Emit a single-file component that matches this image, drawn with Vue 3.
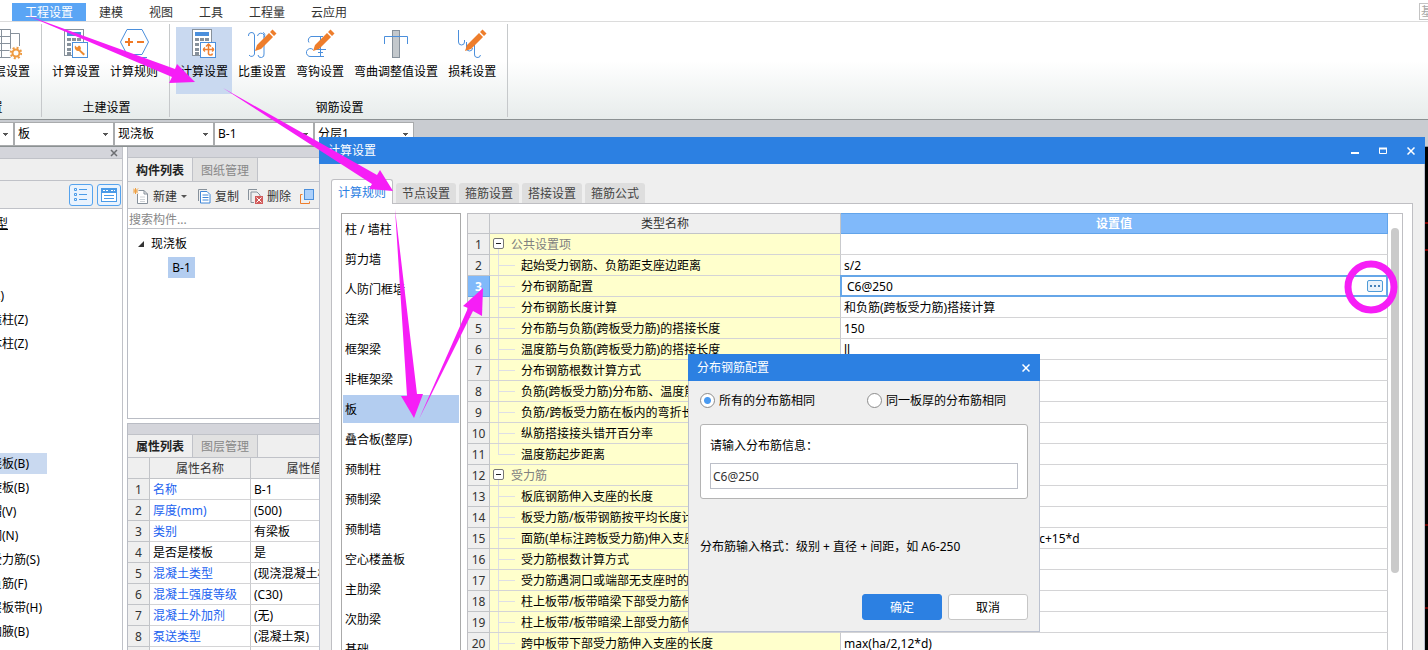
<script setup>
import { ref } from 'vue'

const menus = ['工程设置', '建模', '视图', '工具', '工程量', '云应用']
const ribbon = [
  { title: '基本设置', items: [{ text: '工程信息', icon: '' }, { text: '楼层设置', icon: 'floor' }] },
  { title: '土建设置', items: [{ text: '计算设置', icon: 'wrench' }, { text: '计算规则', icon: 'hexagon' }] },
  {
    title: '钢筋设置',
    items: [
      { text: '计算设置', icon: 'rebar', active: true },
      { text: '比重设置', icon: 'weight' },
      { text: '弯钩设置', icon: 'hook' },
      { text: '弯曲调整值设置', icon: 'bend' },
      { text: '损耗设置', icon: 'loss' },
    ],
  },
]
const combos = [
  { label: '楼层', value: '首层' },
  { label: '构件类别', value: '板' },
  { label: '构件类型', value: '现浇板' },
  { label: '构件', value: 'B-1' },
  { label: '分层', value: '分层1' },
]
const navTree = [
  '', '', '柱(Z)', '构造柱(Z)', '砌体柱(Z)', '', '', '', '',
  '现浇板(B)', '螺旋板(B)', '柱帽(V)', '板洞(N)', '板受力筋(S)', '板负筋(F)', '楼层板带(H)', '板加腋(B)',
]
const props = [
  { name: '名称', value: 'B-1', link: true },
  { name: '厚度(mm)', value: '(500)', link: true },
  { name: '类别', value: '有梁板', link: true },
  { name: '是否是楼板', value: '是', link: false },
  { name: '混凝土类型', value: '(现浇混凝土板)', link: true },
  { name: '混凝土强度等级', value: '(C30)', link: true },
  { name: '混凝土外加剂', value: '(无)', link: true },
  { name: '泵送类型', value: '(混凝土泵)', link: true },
  { name: '', value: '', link: true },
]
const ruleTabs = ['计算规则', '节点设置', '箍筋设置', '搭接设置', '箍筋公式']
const kinds = [
  '柱 / 墙柱', '剪力墙', '人防门框墙', '连梁', '框架梁', '非框架梁', '板', '叠合板(整厚)',
  '预制柱', '预制梁', '预制墙', '空心楼盖板', '主肋梁', '次肋梁', '基础',
]
const currentKind = ref('板')
const rules = [
  { name: '公共设置项', group: true, value: '' },
  { name: '起始受力钢筋、负筋距支座边距离', value: 's/2' },
  { name: '分布钢筋配置', value: 'C6@250', editing: true },
  { name: '分布钢筋长度计算', value: '和负筋(跨板受力筋)搭接计算' },
  { name: '分布筋与负筋(跨板受力筋)的搭接长度', value: '150' },
  { name: '温度筋与负筋(跨板受力筋)的搭接长度', value: 'll' },
  { name: '分布钢筋根数计算方式', value: '' },
  { name: '负筋(跨板受力筋)分布筋、温度筋是否带弯勾', value: '' },
  { name: '负筋/跨板受力筋在板内的弯折长度', value: '' },
  { name: '纵筋搭接接头错开百分率', value: '' },
  { name: '温度筋起步距离', value: '', last: true },
  { name: '受力筋', group: true, value: '' },
  { name: '板底钢筋伸入支座的长度', value: '' },
  { name: '板受力筋/板带钢筋按平均长度计算', value: '' },
  { name: '面筋(单标注跨板受力筋)伸入支座的锚固长度', value: '能直锚就直锚,否则按公式计算:ha-bhc+15*d' },
  { name: '受力筋根数计算方式', value: '' },
  { name: '受力筋遇洞口或端部无支座时的弯折长度', value: '' },
  { name: '柱上板带/板带暗梁下部受力筋伸入支座的长度', value: '' },
  { name: '柱上板带/板带暗梁上部受力筋伸入支座的长度', value: '' },
  { name: '跨中板带下部受力筋伸入支座的长度', value: 'max(ha/2,12*d)' },
  { name: '', value: '' },
]
const mode = ref('same')
const rebar = ref('C6@250')
</script>

<template>
  <div class="app">
    <nav class="menubar">
      <button v-for="(m, i) in menus" :key="m" class="menu" :class="{ on: i === 0 }">{{ m }}</button>
      <span class="menu-search">基</span>
    </nav>

    <header class="ribbon">
      <section v-for="g in ribbon" :key="g.title" class="section">
        <div class="tools">
          <button v-for="t in g.items" :key="t.text" class="tool" :class="{ on: t.active }">
            <svg width="32" height="32" viewBox="0 0 32 32" fill="none" aria-hidden="true">
              <g v-if="t.icon === 'floor'" stroke="#87919b">
                <path d="M1 1.500H20.500V29.500H1M1 8.500H20.500M1 15.500H20.500M1 22.500H20.500M11.500 1.500V29.500M20.500 5.500H29.500V18" />
                <circle cx="26" cy="25" r="7" fill="#fcfcfc" stroke="none" />
                <circle cx="26" cy="25" r="3.500" stroke="#ee9a40" stroke-width="2" />
                <circle cx="26" cy="25" r="5.200" stroke="#ee9a40" stroke-width="2" stroke-dasharray="2 2.080" />
              </g>
              <g v-else-if="t.icon === 'wrench' || t.icon === 'rebar'">
                <rect x="4.500" y="1.500" width="19" height="26" fill="#fff" stroke="#87919b" />
                <rect x="7" y="4" width="14" height="4" fill="#4b8fdc" />
                <path d="M7 11.500h14M7 16.500h14M7 21.500h14M7 25.500h14" stroke="#87919b" stroke-width="3" stroke-dasharray="4 1" />
                <rect x="12.500" y="14.500" width="15" height="15" fill="#fff" stroke="#4b8fdc" />
                <path v-if="t.icon === 'wrench'" d="M15 17.500l2 2 2-2a3.500 3.500 0 0 1 1.500 4.500l4.500 4-1.500 1.500-4.500-4.500c-3 0-5-2-4-5.500z" fill="#ee8a30" />
                <path v-else d="M20.500 16.500v8a2 2 0 0 0 4 1M18 18.500l2.500-2.500 2.500 2.500M15 21.500h11M17 19.500q-3 2 0 4M24 19.500q3 2 0 4" stroke="#f08030" stroke-width="1.500" />
              </g>
              <g v-else-if="t.icon === 'hexagon'">
                <path d="M9 1.500H24L30.500 14 24 26.500H9L2.500 14Z" fill="#fff" stroke="#4b8fdc" />
                <path d="M13 29.500H29" stroke="#4b8fdc" />
                <path d="M7 14h8M11 10v8M19 14h7" stroke="#f07a26" stroke-width="2" />
              </g>
              <g v-else-if="t.icon === 'bend'">
                <rect x="12.500" y="2.500" width="7" height="27" fill="#c3c8cc" stroke="#87919b" />
                <path d="M4.500 16V8.500H27.500V16" stroke="#4b8fdc" />
              </g>
              <g v-else-if="t.icon">
                <path v-if="t.icon === 'weight'" d="M2.500 8a3 3 0 0 1 6-1V26a3 3 0 0 1-5.500 1M11.500 8a3.500 3.500 0 0 1 6.500-1V26a3 3 0 0 1-6 1M17 4.500q3 1 1 5" stroke="#4b8fdc" />
                <path v-else-if="t.icon === 'hook'" d="M19 8.500H7a4 4 0 0 0-2 6M20 28.500H7a4 4 0 1 1 2-7M16.500 8v21M11 21.500h11M14 24.500h5" stroke="#4b8fdc" />
                <path v-else d="M2.500 2V14a3 3 0 0 0 6 0V12M10.500 14v6a3 3 0 0 0 6 0M18.500 16v10a3 3 0 0 0 6 1" stroke="#4b8fdc" />
                <path d="M9 23l2-6L23 5l4 4-12 12zM24 4l2.500-2.500 4 4L28 8z" fill="#ee7d2b" />
              </g>
            </svg>
            <span>{{ t.text }}</span>
          </button>
        </div>
        <h2 class="section-title">{{ g.title }}</h2>
      </section>
    </header>

    <div class="combos">
      <select v-for="c in combos" :key="c.label" :aria-label="c.label" class="combo">
        <option>{{ c.value }}</option>
      </select>
    </div>

    <main class="work">
      <aside class="nav">
        <div class="grip"><button class="grip-close" aria-label="关闭"><svg width="8" height="8" viewBox="0 0 8 8"><path d="M1 1l6 6M7 1L1 7" stroke="#6c6e72" stroke-width="1.500" /></svg></button></div>
        <div class="nav-blank"></div>
        <div class="nav-tools">
          <button class="view" aria-label="列表视图">
            <svg width="14" height="14" viewBox="0 0 14 14" fill="none" stroke="#4a9be8"><path d="M.5.500h2v2h-2zM.5 5.500h2v2h-2zM.5 10.500h2v2h-2zM5 1.500h8M5 6.500h8M5 11.500h8" /></svg>
          </button>
          <button class="view" aria-label="窗口视图">
            <svg width="16" height="14" viewBox="0 0 16 14" fill="none" stroke="#4a9be8"><rect x=".5" y=".5" width="15" height="13" fill="#fff" /><path d="M0 2.500h16" stroke-width="5" /><path d="M2 2.500h6M10 2.500h4" stroke="#fff" stroke-dasharray="2 1" /><path d="M3 7.500h10M3 10.500h10" /></svg>
          </button>
        </div>
        <ul class="nav-tree">
          <li class="nav-head">类型</li>
          <li v-for="(n, i) in navTree" :key="i"><span :class="{ on: n === '现浇板(B)' }">{{ n }}</span></li>
        </ul>
      </aside>

      <div class="side">
        <section class="panel parts">
          <div class="grip"></div>
          <div class="ptabs"><button class="ptab on">构件列表</button><button class="ptab">图纸管理</button></div>
          <div class="ptools">
            <button class="pt-new">
              <svg width="16" height="16" viewBox="0 0 16 16" fill="none"><path d="M5.500 2.500H11l3.500 3.500V15.500H4.500V6M11 2.500V6h3.500" fill="#fff" stroke="#87919b" /><path d="M7 9h5M7 11.500h5M7 13.500h5" stroke="#cfd3d7" /><path d="M0 .5l5 5M5 .5l-5 5M2.500 0v6M0 3h5" stroke="#f0a040" /></svg>
              <span>新建</span><i class="caret"></i>
            </button>
            <button class="pt-copy">
              <svg width="13" height="15" viewBox="0 0 13 15" fill="none"><path d="M9 .5H.5V12" stroke="#87919b" /><path d="M2.500 2.500H9l3 3V14H2.500z" fill="#fff" stroke="#3f86d8" /><path d="M4.500 6h6M4.500 8.500h6M4.500 11h6" stroke="#3f86d8" /></svg>
              <span>复制</span>
            </button>
            <button class="pt-del">
              <svg width="15" height="15" viewBox="0 0 15 15" fill="none"><path d="M9 .5H.5V11M3 3h6l3 3v2M3 3v10.500h3" stroke="#87919b" /><rect x="7" y="7" width="8" height="8" fill="#d25b5b" /><path d="M8.500 8.500l5 5M13.500 8.500l-5 5" stroke="#fff" /></svg>
              <span>删除</span>
            </button>
            <button class="pt-layer" aria-label="层间复制">
              <svg width="15" height="15" viewBox="0 0 15 15" fill="none"><path d="M2.500 5.500H.5v9h9v-2" stroke="#ee7d2b" /><rect x="4.500" y=".5" width="9" height="10" fill="#acd0fb" stroke="#4b8fdc" /></svg>
            </button>
          </div>
          <input class="search" type="text" placeholder="搜索构件..." aria-label="搜索构件" />
          <div class="parts-tree">
            <div class="parts-root"><svg width="6" height="6" viewBox="0 0 6 6"><path d="M6 0V6H0z" fill="#333" /></svg>现浇板</div>
            <div class="parts-leaf">B-1</div>
          </div>
        </section>

        <section class="panel attrs">
          <div class="grip"></div>
          <div class="ptabs"><button class="ptab on">属性列表</button><button class="ptab">图层管理</button></div>
          <table class="attr-table">
            <colgroup><col class="c-no" /><col class="c-key" /><col /></colgroup>
            <thead><tr><th></th><th>属性名称</th><th>属性值</th></tr></thead>
            <tbody>
              <tr v-for="(p, i) in props" :key="i">
                <th>{{ i + 1 }}</th>
                <td :class="{ link: p.link }">{{ p.name }}</td>
                <td>{{ p.value }}</td>
              </tr>
            </tbody>
          </table>
        </section>
      </div>

      <div class="canvas">
        <svg width="100%" height="100%" aria-hidden="true"><path d="M0 76H2000M0 103H2000" stroke="#7a0000" stroke-width="2" /><path d="M0 378H2000M0 461H2000" stroke="#d00000" /></svg>
      </div>
    </main>

    <section class="dialog" role="dialog" aria-label="计算设置">
      <div class="titlebar">
        <h1>计算设置</h1>
        <button aria-label="最小化"><svg width="8" height="8" viewBox="0 0 8 8"><path d="M0 6h8" stroke="#fff" stroke-width="2" /></svg></button>
        <button aria-label="最大化"><svg width="8" height="8" viewBox="0 0 8 8" fill="none"><path d="M.5 1V6.500H7.500V1" stroke="#fff" /><path d="M0 1.500H8" stroke="#fff" stroke-width="2" /></svg></button>
        <button aria-label="关闭"><svg width="8" height="8" viewBox="0 0 8 8"><path d="M.5.500l7 7M7.500.500l-7 7" stroke="#fff" stroke-width="1.500" /></svg></button>
      </div>
      <div class="dialog-body">
        <div class="rtabs"><button v-for="(t, i) in ruleTabs" :key="t" class="rtab" :class="{ on: i === 0 }">{{ t }}</button></div>
        <div class="pane">
          <ul class="kinds">
            <li v-for="k in kinds" :key="k"><button :class="{ on: k === currentKind }" @click="currentKind = k">{{ k }}</button></li>
          </ul>
          <div class="grid">
            <table class="rules">
              <colgroup><col class="c-no" /><col class="c-name" /><col /></colgroup>
              <thead><tr><th></th><th>类型名称</th><th class="cur">设置值</th></tr></thead>
              <tbody>
                <tr v-for="(r, i) in rules" :key="i">
                  <th :class="{ cur: r.editing }">{{ i + 1 }}</th>
                  <td class="name" :class="{ parent: r.group, last: r.last }">
                    <button v-if="r.group" class="fold" aria-label="折叠"></button>{{ r.name }}
                  </td>
                  <td class="value">
                    <div v-if="r.editing" class="editor">
                      <input type="text" :value="r.value" :aria-label="r.name" />
                      <button aria-label="更多"><i></i><i></i><i></i></button>
                    </div>
                    <template v-else>{{ r.value }}</template>
                  </td>
                </tr>
              </tbody>
            </table>
            <div class="scroll"><div class="thumb"></div></div>
          </div>
        </div>
      </div>
    </section>

    <form class="popup" role="dialog" aria-label="分布钢筋配置" @submit.prevent>
      <div class="titlebar">
        <h1>分布钢筋配置</h1>
        <button type="button" aria-label="关闭"><svg width="8" height="8" viewBox="0 0 8 8"><path d="M.5.500l7 7M7.500.500l-7 7" stroke="#fff" stroke-width="1.500" /></svg></button>
      </div>
      <div class="popup-body">
        <div class="radios">
          <label><input v-model="mode" type="radio" value="same" /><span>所有的分布筋相同</span></label>
          <label><input v-model="mode" type="radio" value="thick" /><span>同一板厚的分布筋相同</span></label>
        </div>
        <div class="box">
          <label for="rebar">请输入分布筋信息：</label>
          <input id="rebar" v-model="rebar" type="text" />
        </div>
        <p class="hint">分布筋输入格式：级别 + 直径 + 间距，如 A6-250</p>
        <div class="actions">
          <button type="submit" class="ok">确定</button>
          <button type="button">取消</button>
        </div>
      </div>
    </form>

    <svg class="marks" aria-hidden="true">
      <path d="M26 15L175 69 177 64 195 82 169 83 172 77Z" />
      <path d="M223 88L377 175 380 170 393 191 369 189 372 184Z" />
      <path d="M395 209L417 394 423 394 414 418 401 396 407 396Z" />
      <path d="M419 419L468 308 463 306 483 288 482 316 473 311Z" />
      <circle cx="1371" cy="287" r="23" />
    </svg>
  </div>
</template>

<style>
body { margin: 0; }
</style>

<style scoped>
.app {
  position: relative;
  display: flex;
  flex-direction: column;
  height: 100vh;
  overflow: hidden;
  background: #fff;
  color: #000;
  font: 12px/18px "Noto Sans", "Noto Sans CJK SC", sans-serif;
}
.app *, .app *::before, .app *::after { box-sizing: border-box; }
button, input, select { font: inherit; color: inherit; margin: 0; padding: 0; border: 0; background: none; border-radius: 0; outline: 0; }
h1, h2, p, ul { margin: 0; padding: 0; font: inherit; list-style: none; }
svg { display: block; flex: none; }
button, th, td, li, label { white-space: nowrap; }

.menubar { flex: none; display: flex; align-items: flex-end; height: 22px; padding-left: 12px; border-bottom: 1px solid #dcdcdc; color: #333; }
.menu { height: 18px; padding: 2px 13px 0; line-height: 16px; }
.menu.on { background: #5aa5f5; color: #fff; }
.menu-search { align-self: flex-end; margin: 0 0 1px auto; width: 9px; height: 17px; padding-left: 1px; overflow: hidden; border: 1px solid #c4c4c4; border-right: 0; color: #a8a8a8; line-height: 16px; }

.ribbon { flex: none; display: flex; height: 98px; padding-top: 2px; border-bottom: 1px solid #8b9192; background: linear-gradient(#fff 40%, #e7eceb); }
.section { display: flex; flex-direction: column; height: 93px; padding: 3px 7px 0 6px; border-right: 1px solid #c6c9cb; }
.section:first-child { margin-left: -86px; }
.tools { flex: none; display: flex; gap: 2px; height: 67px; }
.tool { display: flex; flex-direction: column; align-items: center; gap: 3px; padding: 1px 4px 0; }
.tool.on { background: #c9d9f0; }
.section-title { margin-top: 5px; padding-left: 3px; text-align: center; }

.combos { flex: none; display: flex; height: 27px; padding: 2px 0; background: #c9ccd1; border-bottom: 1px solid #8b9192; }
.combo { flex: none; width: 100px; height: 24px; padding: 0 0 1px 3px; appearance: none; border: 1px solid #a9abad; background: linear-gradient(#555, #555) right 5px top 10px / 5px 1px no-repeat, linear-gradient(#555, #555) right 6px top 11px / 3px 1px no-repeat, linear-gradient(#555, #555) right 7px top 12px / 1px 1px no-repeat, #fff; }
.combo:first-child { margin-left: -86px; }

.work { flex: 1; min-height: 0; display: flex; }
.nav { flex: none; display: flex; flex-direction: column; width: 123px; overflow: hidden; border-right: 1px solid #c0c2c8; background: #fff; }
.grip { flex: none; height: 12px; background: #d4d5db; border-bottom: 1px solid #c0c2c8; }
.nav .grip { display: flex; justify-content: flex-end; align-items: center; padding-right: 4px; }
.nav-blank { flex: none; height: 22px; background: #efefef; border-bottom: 1px solid #c0c2c8; }
.nav-tools { flex: none; display: flex; justify-content: flex-end; align-items: center; gap: 4px; height: 28px; padding-right: 1px; background: #efefef; border-bottom: 1px solid #c0c2c8; }
.view { display: flex; align-items: center; justify-content: center; width: 24px; height: 22px; border: 1px solid #55a3ee; border-radius: 3px; background: #e9f3fe; }
.nav-tree { margin-left: -22px; padding-top: 3px; }
.nav-tree li { height: 24px; padding: 1px 0 2px; }
.nav-tree span { display: inline-block; height: 21px; line-height: 21px; }
.nav-tree span.on { width: 69px; background: #c9d9f0; }
.nav-tree .nav-head { padding: 3px 0 0 6px; text-decoration: underline; }

.side { flex: none; display: flex; flex-direction: column; gap: 4px; width: 233px; margin-left: 4px; }
.panel { border: 1px solid #b9bcc4; background: #efefef; }
.panel .grip { height: 11px; }
.parts { flex: none; display: flex; flex-direction: column; height: 272px; border-top: 0; }
.attrs { flex: 1; min-height: 0; overflow: hidden; border-bottom: 0; }
.ptabs { flex: none; display: flex; height: 24px; border-bottom: 1px solid #c0c2c8; }
.attrs .ptabs { height: 23px; }
.ptab { width: 65px; padding-top: 2px; border-right: 1px solid #c0c2c8; background: #e1e1e1; color: #888; }
.ptab.on { background: #efefef; color: #222; font-weight: bold; }
.ptools { flex: none; display: flex; align-items: center; height: 27px; padding: 2px 0 0 5px; border-bottom: 1px solid #c0c2c8; color: #333; }
.ptools button { display: flex; align-items: center; gap: 4px; }
.ptools span { padding-top: 2px; }
.pt-copy { margin-left: 11px; }
.pt-del, .pt-layer { margin-left: 9px; }
.caret { border: 3px solid transparent; border-top-color: #555; border-bottom: 0; }
.search { flex: none; height: 20px; padding: 1px 0 0 1px; border-bottom: 1px solid #c0c2c8; background: #fff; }
.search::placeholder { color: #888; opacity: 1; }
.parts-tree { flex: 1; padding-top: 4px; background: #fff; }
.parts-root { display: flex; align-items: center; gap: 7px; height: 22px; padding-left: 10px; }
.parts-leaf { width: 27px; height: 21px; margin: 2px 0 0 40px; line-height: 21px; text-align: center; background: #b3cdf0; }

table { border-spacing: 0; table-layout: fixed; width: 100%; background: #fff; }
th, td { height: 21px; padding: 2px 0 0; border-right: 1px solid #c9cacd; border-bottom: 1px solid #d4d4d6; line-height: 18px; overflow: hidden; font-weight: normal; }
th { background: #efefef; color: #333; text-align: center; border-color: #c2c4c8; }
.attr-table td { padding-left: 3px; text-align: left; }
.attr-table .c-no { width: 22px; }
.attr-table .c-key { width: 101px; }
.link { color: #1b62f0; }

.canvas { flex: 1; overflow: hidden; background: #000; }

.dialog { position: absolute; inset: 137px 3px 0 319px; isolation: isolate; display: flex; flex-direction: column; background: #efefef; border: solid #bcc2d0; border-width: 0 1px; }
.titlebar { flex: none; display: flex; align-items: center; height: 27px; margin: 0 -1px; padding-left: 9px; background: #2c80e2; color: #fff; }
.titlebar h1 { flex: 1; }
.titlebar button { display: flex; align-items: center; justify-content: center; width: 28px; height: 27px; }
.dialog-body { flex: 1; min-height: 0; display: flex; flex-direction: column; padding: 15px 11px 0; }
.rtabs { flex: none; display: flex; align-items: flex-end; gap: 3px; height: 25px; margin-bottom: -1px; z-index: 1; }
.rtab { width: 60px; height: 20px; margin-bottom: 1px; padding-top: 2px; border-radius: 3px 3px 0 0; background: #dedede; color: #444; }
.rtab.on { width: 62px; height: 25px; margin: 0; padding-top: 1px; border: 1px solid #bfbfc3; border-bottom: 0; background: #fff; color: #2c80e2; }
.pane { flex: 1; min-height: 0; display: flex; gap: 6px; padding: 9px 9px 0; overflow: hidden; border: 1px solid #bfbfc3; border-bottom: 0; background: #fff; }
.kinds { flex: none; width: 120px; padding: 1px; border: 1px solid #aaa; border-bottom: 0; }
.kinds button { display: block; width: 100%; height: 28px; margin-bottom: 2px; padding: 2px 0 0 2px; text-align: left; }
.kinds .on { background: #b3cdf0; }
.grid { flex: 1; display: flex; border: 1px solid #bfbfc3; border-bottom: 0; }
.rules { flex: 1; height: max-content; margin-top: -1px; }
.rules .c-no { width: 22px; }
.rules .c-name { width: 351px; }
.rules thead th { padding-top: 1px; border-top: 1px solid #bfbfc3; }
.rules .cur { background: #80b9fa; border-color: #62a4ea; color: #fff; font-weight: bold; }
.rules thead .cur { border-color: #62a4ea; }
.name { position: relative; padding-left: 31px; background: #ffffcc; }
.name.parent { padding-left: 21px; color: #808080; }
.name::before { content: ""; position: absolute; left: 8px; top: 0; width: 1px; height: 21px; background: #dedfe6; }
.name.parent::before { top: 15px; height: 6px; }
.name.last::before { height: 10px; }
.name:not(.parent)::after { content: ""; position: absolute; left: 8px; top: 10px; width: 17px; height: 1px; background: #dedfe6; }
.fold { position: absolute; left: 3px; top: 4px; width: 11px; height: 11px; border: 1px solid #777; border-radius: 2px; background: linear-gradient(#222, #222) center / 5px 1px no-repeat #fff; }
.value { position: relative; padding-left: 3px; overflow: visible; }
.editor { position: absolute; inset: -1px; display: flex; align-items: center; padding: 0 3px 0 5px; border: 2px solid #66a6e8; background: #fff; }
.editor input { flex: 1; min-width: 0; height: 18px; padding-top: 1px; }
.editor button { display: flex; align-items: center; justify-content: center; gap: 2px; width: 16px; height: 12px; border: 1px solid #4f9bd8; border-radius: 2px; background: #e9f2fb; }
.editor i { width: 2px; height: 2px; background: #4380b8; }
.scroll { flex: none; width: 14px; padding: 14px 3px 0; }
.thumb { height: 345px; border-radius: 4px; background: #cacaca; }

.popup { position: absolute; left: 688px; top: 354px; width: 352px; background: #efefef; border: 1px solid #bcc2d0; border-top: 0; }
.popup-body { padding: 11px; }
.radios { display: flex; height: 16px; align-items: center; }
.radios label { flex: none; display: flex; align-items: center; gap: 4px; }
.radios label:first-child { width: 167px; }
.radios span { padding-top: 2px; }
.radios input { appearance: none; width: 15px; height: 15px; border: 1px solid #8c8c8c; border-radius: 50%; background: #fff; }
.radios input:checked { background: radial-gradient(circle, #4a9af0 0 3px, #fff 4px); }
.box { margin-top: 16px; padding: 12px 9px 9px; border: 1px solid #b4b4b4; border-radius: 3px; background: #fff; }
.box label { display: block; height: 18px; margin-bottom: 8px; }
.box input { display: block; width: 100%; height: 26px; padding-left: 2px; border: 1px solid #bcbfc8; color: #333; }
.hint { margin-top: 39px; }
.actions { display: flex; justify-content: flex-end; gap: 6px; margin-top: 38px; }
.actions button { width: 80px; height: 26px; padding-top: 2px; line-height: 20px; border: 1px solid #c6c6c6; border-radius: 3px; background: #fff; }
.actions .ok { border-color: #2c80e2; background: #2c80e2; color: #fff; }

.marks { position: absolute; inset: 0; z-index: 2; width: 100%; height: 100%; pointer-events: none; fill: #f61ef6; }
.marks circle { fill: none; stroke: #f61ef6; stroke-width: 7px; }
</style>
